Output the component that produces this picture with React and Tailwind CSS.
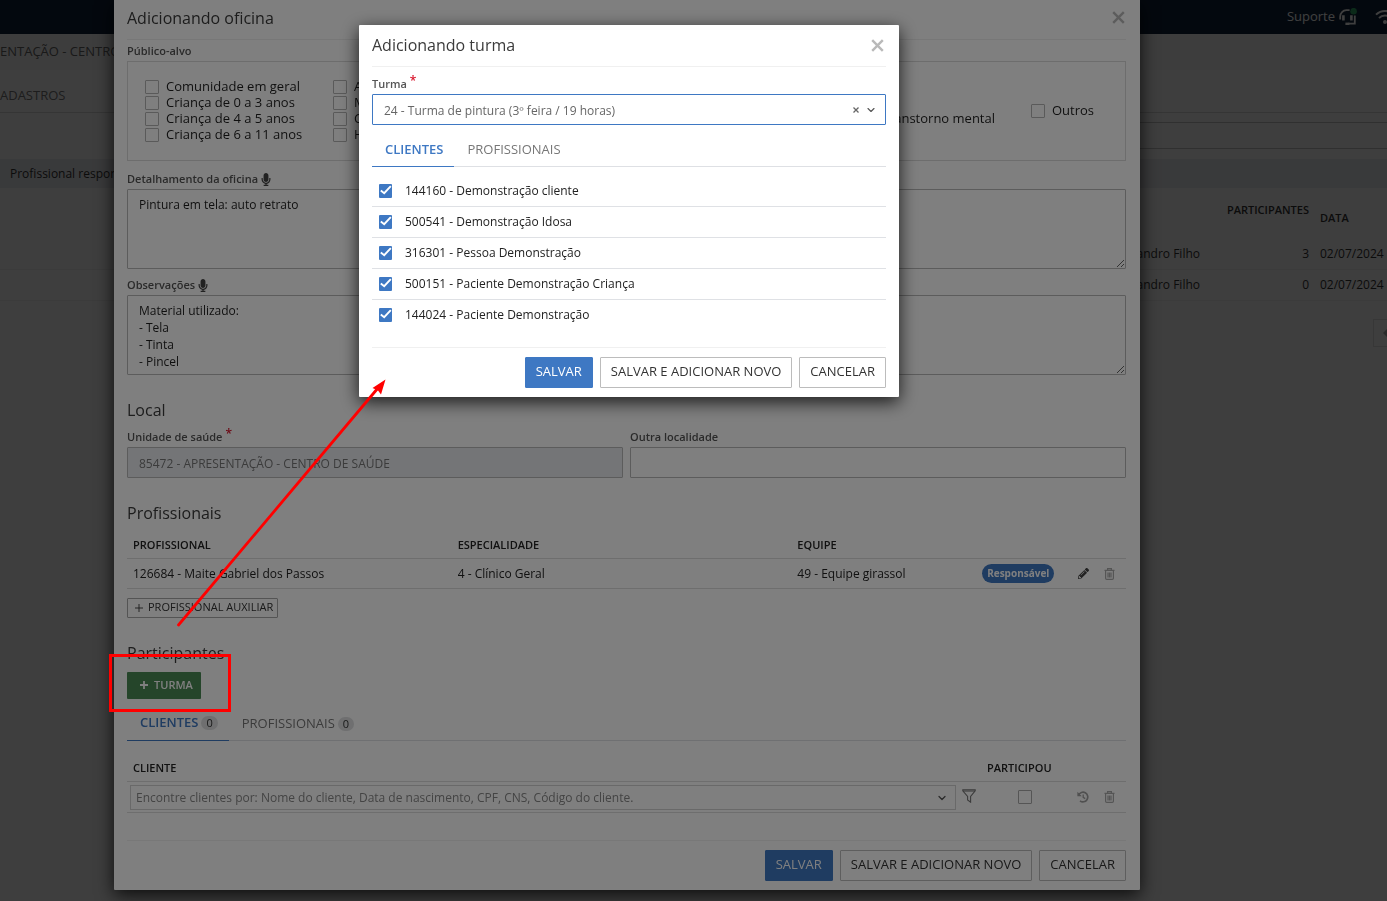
import React from "react";
import { FaMicrophone, FaPencilAlt } from "react-icons/fa";
import { ChevronDown } from "lucide-react";

const FONT = "font-['Open_Sans','Noto_Sans',sans-serif]";

function CloseIcon() {
  return (
    <svg viewBox="0 0 13 13" className="size-[13px]" fill="none" stroke="#b9b9b9" strokeWidth="2.4">
      <path d="M1.200 1.200l10.600 10.600M11.800 1.200L1.200 11.800" />
    </svg>
  );
}

function TrashIcon() {
  return (
    <svg viewBox="0 0 11 12" className="h-3 w-[11px]" fill="none" stroke="#aaaaaa" strokeWidth="1.2">
      <path d="M0.5 2.4h10M3.6 2.2V0.7h3.8v1.5M1.6 2.6v7.6q0 1.2 1.2 1.2h5.4q1.2 0 1.2-1.2V2.6M4 4.6v4.8M5.5 4.6v4.8M7 4.6v4.8" />
    </svg>
  );
}

function HistoryIcon() {
  return (
    <svg viewBox="0 0 12 12" className="size-3" fill="none" stroke="#a0a0a0" strokeWidth="1.7">
      <path d="M1.6 4A4.8 4.8 0 1 1 3 9.8" />
      <path d="M6.2 3.4v3l2 1.2" strokeWidth="1.3" />
      <path d="M0.4 0.8v4.4h4.4z" fill="#a0a0a0" stroke="none" />
    </svg>
  );
}

function FilterIcon() {
  return (
    <svg viewBox="0 0 14 14" className="size-3.5" fill="none" stroke="#777" strokeWidth="1.1">
      <path d="M0.8 0.8h12.4v1L8.6 7.4v5.8L5.6 11V7.4L0.8 1.8z" />
      <path d="M1 2h12" />
    </svg>
  );
}

function PlusIcon({ className }) {
  return (
    <svg viewBox="0 0 9 9" className={className} fill="none" stroke="currentColor">
      <path d="M4.5 0v9M0 4.5h9" />
    </svg>
  );
}

function HeadsetIcon() {
  return (
    <svg viewBox="0 0 18 18" className="size-[18px]" fill="none" stroke="#ffffff" strokeWidth="1.8">
      <path d="M1.200 11.400V8.600A6.400 6.400 0 0 1 7.400 2.200h3.200" />
      <path d="M15.800 7.600V15.600H9.400" />
      <path d="M4.400 7.200v5.400M12.400 7.200v5.400" strokeWidth="2.600" />
      <path d="M6.400 15.800h4" strokeWidth="2.400" />
      <circle cx="14.600" cy="3.200" r="3.300" fill="#2fa866" stroke="none" />
    </svg>
  );
}

function WifiIcon() {
  return (
    <svg viewBox="0 0 20 16" className="h-4 w-5 shrink-0" fill="none" stroke="#ffffff" strokeWidth="2">
      <path d="M1 5.6a13 13 0 0 1 18 0M4 9a8.6 8.6 0 0 1 12 0" />
      <circle cx="10" cy="13" r="2" fill="#ffffff" stroke="none" />
    </svg>
  );
}

function Label({ children, htmlFor, required, mic }) {
  return (
    <label htmlFor={htmlFor} className="flex h-[21px] items-center pt-[2px] text-[11px] font-semibold text-[#555]">
      {children}
      {required && <span className="ml-[3px] self-start text-[12px] leading-3 text-[#d9142b]">*</span>}
      {mic && <FaMicrophone className="ml-[3px] h-[13px] w-2.5 text-[#444]" />}
    </label>
  );
}

function Box({ label }) {
  return (
    <label className="flex h-4 items-center gap-[7px] whitespace-nowrap text-[13px] text-[#1f1f1f]">
      <input
        type="checkbox"
        className="size-3.5 shrink-0 appearance-none rounded-[1px] border border-[#b5b5b5] bg-white"
      />
      {label}
    </label>
  );
}

function Btn({ children, primary }) {
  return (
    <button
      type="button"
      className={`h-[31px] rounded-[1px] border px-[10px] pb-[2px] text-[13px] ${
        primary ? "border-[#3e78c3] bg-[#3e78c3] font-medium text-white" : "border-[#bcbcbc] bg-white text-[#333]"
      }`}
    >
      {children}
    </button>
  );
}

function Footer({ className }) {
  return (
    <footer className={`flex justify-end gap-[7px] border-t border-[#f0f0f0] py-[9px] ${className}`}>
      <Btn primary>SALVAR</Btn>
      <Btn>SALVAR E ADICIONAR NOVO</Btn>
      <Btn>CANCELAR</Btn>
    </footer>
  );
}

function Tabs({ counts }) {
  const badge = "rounded-full bg-[#dedfe1] px-[5px] text-[11px] font-normal leading-[14px] text-[#333]";
  return (
    <div role="tablist" className="mt-2 flex h-[34px] border-b border-[#dee0e4] text-[13px]">
      <button
        role="tab"
        aria-selected="true"
        className="flex h-[34px] items-center gap-[3px] border-b border-[#3e78c3] pr-[11px] pl-[13px] font-semibold text-[#3e78c3]"
      >
        CLIENTES {counts && <span className={badge}>0</span>}
      </button>
      <button
        role="tab"
        aria-selected="false"
        className="flex h-[34px] items-center gap-[3px] pr-[11px] pl-[13px] text-[#777]"
      >
        PROFISSIONAIS {counts && <span className={badge}>0</span>}
      </button>
    </div>
  );
}

function Backdrop() {
  return (
    <div className="flex min-h-screen flex-col bg-[#f9f9f9] text-[12px] text-[#333]">
      <div className="flex h-[34px] items-center justify-end gap-1 bg-[#0e2038] text-[13px] text-white">
        <span>Suporte</span>
        <HeadsetIcon />
        <span className="ml-[14px] flex w-3 overflow-hidden">
          <WifiIcon />
        </span>
      </div>
      <div className="flex h-9 items-center border-b border-[#f4f4f4] bg-[#f5f5f5] text-[13px] text-[#666]">
        ENTAÇÃO - CENTRO
      </div>
      <div className="flex h-[43px] items-center border-b border-[#d5d5d5] pt-[9px] text-[13px] text-[#777]">
        ADASTROS
      </div>
      <div className="ml-[160px] mt-[9px] h-[27px] border-y border-[#c0c0c0]" />
      <div className="mt-[10px] flex h-[29px] items-center bg-[#e6e8ec] px-[10px]">Profissional respon</div>
      <table className="w-full table-fixed text-[12px]">
        <colgroup>
          <col />
          <col className="w-[114px]" />
          <col className="w-[73px]" />
        </colgroup>
        <thead>
          <tr className="h-[50px] text-[11px]">
            <td />
            <th className="pr-[5px] pb-[6px] text-right font-semibold">PARTICIPANTES</th>
            <th className="px-[6px] pt-[11px] text-left font-semibold">DATA</th>
          </tr>
        </thead>
        <tbody>
          {["3", "0"].map((n) => (
            <tr key={n} className="h-[31px] border-b border-[#ececec]">
              <td className="pt-px text-right">andro Filho</td>
              <td className="pt-px pr-[5px] text-right">{n}</td>
              <td className="px-[6px] pt-px">02/07/2024</td>
            </tr>
          ))}
        </tbody>
      </table>
      <div className="mt-[18px] flex h-7 w-3.5 items-center self-end overflow-hidden border border-r-0 border-[#dedede] pl-[9px]">
        <svg viewBox="0 0 5 10" className="h-2.5 w-[5px] shrink-0" fill="#aaa">
          <path d="M5 0v10L0 5z" />
        </svg>
      </div>
    </div>
  );
}

function WorkshopDialog() {
  const h = "mt-[23px] h-6 text-[16px] leading-6 text-[#3b3b3b]";
  const area =
    "block h-20 w-full resize rounded-[1px] border border-[#b9b9b9] bg-white px-[11px] py-[6px] text-[12px] leading-[17px] text-[#1f1f1f]";
  return (
    <section
      role="dialog"
      aria-label="Adicionando oficina"
      className="w-full max-w-[1026px] self-start rounded-b-[1px] bg-white pr-[14px] pl-[13px] shadow-[0_5px_18px_rgba(0,0,0,0.8)]"
    >
      <header className="flex h-10 items-center justify-between border-b border-[#efefef] pb-1">
        <h1 className="text-[16px] text-[#3b3b3b]">Adicionando oficina</h1>
        <button aria-label="Fechar" className="mr-px">
          <CloseIcon />
        </button>
      </header>

      <Label>Público-alvo</Label>
      <div className="flex h-[100px] items-center border border-[#dadada] px-[17px]">
        <div className="w-[188px]">
          <Box label="Comunidade em geral" />
          <Box label="Criança de 0 a 3 anos" />
          <Box label="Criança de 4 a 5 anos" />
          <Box label="Criança de 6 a 11 anos" />
        </div>
        <div className="w-[188px]">
          <Box label="A" />
          <Box label="M" />
          <Box label="C" />
          <Box label="H" />
        </div>
        <div className="ml-auto flex h-16 items-end pb-4">
          <Box label="Transtorno mental" />
        </div>
        <div className="ml-9 w-[77px]">
          <Box label="Outros" />
        </div>
      </div>

      <div className="mt-[7px]">
        <Label htmlFor="det" mic>
          Detalhamento da oficina
        </Label>
        <textarea id="det" className={area} defaultValue="Pintura em tela: auto retrato" />
      </div>
      <div className="mt-[5px]">
        <Label htmlFor="obs" mic>
          Observações
        </Label>
        <textarea id="obs" className={area} defaultValue={"Material utilizado:\n- Tela\n- Tinta\n- Pincel"} />
      </div>

      <h2 className={h}>Local</h2>
      <div className="mt-1 grid grid-cols-2 gap-[7px]">
        <div>
          <Label htmlFor="uni" required>
            Unidade de saúde
          </Label>
          <input
            id="uni"
            readOnly
            value="85472 - APRESENTAÇÃO - CENTRO DE SAÚDE"
            className="h-[31px] w-full rounded-[1px] border border-[#b9b9b9] bg-[#e8ebef] px-[11px] pt-[2px] text-[12px] text-[#777]"
          />
        </div>
        <div>
          <Label htmlFor="loc">Outra localidade</Label>
          <input id="loc" className="h-[31px] w-full rounded-[1px] border border-[#b9b9b9] bg-white px-[11px] text-[12px]" />
        </div>
      </div>

      <h2 className={h}>Profissionais</h2>
      <table className="mt-2 w-full table-fixed text-left text-[12px] text-[#222]">
        <colgroup>
          <col className="w-[32.5%]" />
          <col className="w-[34%]" />
          <col className="w-[18.5%]" />
          <col />
        </colgroup>
        <thead>
          <tr className="h-[25px] border-b border-[#dcdcdc] text-[11px]">
            <th className="px-[6px] font-semibold">PROFISSIONAL</th>
            <th className="px-[6px] font-semibold">ESPECIALIDADE</th>
            <th className="px-[6px] font-semibold">EQUIPE</th>
            <td />
          </tr>
        </thead>
        <tbody>
          <tr className="h-[30px] border-b border-[#dcdcdc]">
            <td className="px-[6px] pt-px">126684 - Maite Gabriel dos Passos</td>
            <td className="px-[6px] pt-px">4 - Clínico Geral</td>
            <td className="px-[6px] pt-px">49 - Equipe girassol</td>
            <td className="px-[6px] pt-px">
              <div className="flex items-center">
                <span className="rounded-full bg-[#3e78c3] px-[5px] text-[10px] font-bold leading-[19px] text-white">
                  Responsável
                </span>
                <span className="ml-auto flex items-center gap-[15px] pr-[5px]">
                  <button aria-label="Editar">
                    <FaPencilAlt className="size-[11px] text-[#444]" />
                  </button>
                  <button aria-label="Excluir">
                    <TrashIcon />
                  </button>
                </span>
              </div>
            </td>
          </tr>
        </tbody>
      </table>
      <button className="mt-[9px] flex h-5 items-center gap-[5px] rounded-[1px] border border-[#a8a8a8] pr-1 pl-[7px] text-[11px] text-[#333]">
        <PlusIcon className="size-2" /> PROFISSIONAL AUXILIAR
      </button>

      <h2 className={h}>Participantes</h2>
      <button className="mt-[7px] flex h-[27px] items-center gap-[6px] rounded-[1px] bg-[#4a8a55] pr-2 pl-[13px] text-[11px] font-semibold text-white">
        <PlusIcon className="size-2 stroke-2" /> TURMA
      </button>
      <Tabs counts />
      <table className="mt-[15px] w-full table-fixed text-left text-[12px] text-[#222]">
        <colgroup>
          <col />
          <col className="w-[82px]" />
          <col className="w-[63px]" />
        </colgroup>
        <thead>
          <tr className="h-[26px] border-b border-[#dcdcdc] text-[11px]">
            <th className="px-[6px] font-semibold">CLIENTE</th>
            <th className="px-[6px] font-semibold">PARTICIPOU</th>
            <td />
          </tr>
        </thead>
        <tbody>
          <tr className="h-[31px] border-b border-[#dcdcdc]">
            <td className="pr-[5px] pl-[3px]">
              <div className="flex items-center gap-[6px]">
                <div className="relative flex-1">
                  <select
                    aria-label="Cliente"
                    className="block h-[25px] w-full appearance-none border border-[#d2d2d2] bg-white px-[5px] pt-[2px] text-[12px] text-[#888]"
                  >
                    <option>Encontre clientes por: Nome do cliente, Data de nascimento, CPF, CNS, Código do cliente.</option>
                  </select>
                  <ChevronDown className="pointer-events-none absolute top-[7px] right-2 size-3 text-[#555]" strokeWidth={2.5} />
                </div>
                <button aria-label="Filtrar" className="pb-[3px]">
                  <FilterIcon />
                </button>
              </div>
            </td>
            <td className="pl-[6px]">
              <input
                type="checkbox"
                aria-label="Participou"
                className="mx-auto block size-3.5 appearance-none rounded-[1px] border border-[#aaa] bg-white"
              />
            </td>
            <td className="px-[6px]">
              <span className="flex items-center justify-end gap-[15px] pr-[5px]">
                <button aria-label="Histórico">
                  <HistoryIcon />
                </button>
                <button aria-label="Excluir cliente">
                  <TrashIcon />
                </button>
              </span>
            </td>
          </tr>
        </tbody>
      </table>
      <Footer className="mt-[27px]" />
    </section>
  );
}

const CLIENTS = [
  "144160 - Demonstração cliente",
  "500541 - Demonstração Idosa",
  "316301 - Pessoa Demonstração",
  "500151 - Paciente Demonstração Criança",
  "144024 - Paciente Demonstração",
];

function ClassDialog() {
  return (
    <section
      role="dialog"
      aria-label="Adicionando turma"
      className="mt-[25px] w-full max-w-[540px] self-start rounded-[1px] bg-white px-[13px] shadow-[0_5px_18px_rgba(0,0,0,0.8)]"
    >
      <header className="flex h-[42px] items-center justify-between border-b border-[#f0f0f0]">
        <h1 className="pb-[2px] text-[16px] text-[#3b3b3b]">Adicionando turma</h1>
        <button aria-label="Fechar" className="mr-[2px]">
          <CloseIcon />
        </button>
      </header>
      <div className="mt-[6px]">
        <Label htmlFor="turma" required>
          Turma
        </Label>
        <div className="flex h-[31px] items-center gap-[6px] rounded-[1px] border border-[#3e78c3] pr-2">
          <select id="turma" className="h-full flex-1 appearance-none bg-white pt-[2px] pl-[11px] text-[12px] text-[#666]">
            <option>24 - Turma de pintura (3º feira / 19 horas)</option>
          </select>
          <button aria-label="Limpar">
            <svg viewBox="0 0 6 6" className="size-[6px]" fill="none" stroke="#666" strokeWidth="1.3">
              <path d="M0.5 0.5l5 5M5.5 0.5l-5 5" />
            </svg>
          </button>
          <ChevronDown className="size-3 text-[#555]" strokeWidth={2.3} />
        </div>
      </div>
      <Tabs />
      <ul className="mt-[9px] text-[12px] text-[#222]">
        {CLIENTS.map((c) => (
          <li key={c} className="border-b border-[#dfe1e5] last:border-transparent">
            <label className="flex h-[30px] items-center pl-[7px]">
              <span className="grid h-3.5 w-[13px] rounded-[1px] bg-[#3e78c3]">
                <input
                  type="checkbox"
                  defaultChecked
                  className="col-start-1 row-start-1 h-3.5 w-[13px] appearance-none rounded-[1px]"
                />
                <svg
                  viewBox="0 0 13 14"
                  className="pointer-events-none col-start-1 row-start-1 h-3.5 w-[13px]"
                  fill="none"
                  stroke="#ffffff"
                  strokeWidth="1.9"
                >
                  <path d="M1.800 6.400l3.400 2.800L11.800 2.200" />
                </svg>
              </span>
              <span className="ml-[13px]">{c}</span>
            </label>
          </li>
        ))}
      </ul>
      <Footer className="mt-4" />
    </section>
  );
}

function Annotations() {
  return (
    <svg
      className="pointer-events-none absolute top-0 left-0 h-[901px] w-[500px]"
      viewBox="0 0 500 901"
      fill="none"
      stroke="#ff0000"
      strokeWidth="3"
      aria-hidden="true"
    >
      <rect x="110.5" y="655.5" width="119" height="55" />
      <path d="M178.500 625L378 388" strokeLinecap="round" strokeWidth="2.8" />
      <path d="M385.500 379.500L381 394.500L378 390.500L372.500 388z" fill="#ff0000" stroke="none" />
    </svg>
  );
}

export default function App() {
  return (
    <main className={`relative h-screen overflow-hidden ${FONT}`}>
      <Backdrop />
      <div className="absolute inset-0 flex justify-center bg-black/50 pr-[133px]">
        <WorkshopDialog />
      </div>
      <div className="absolute inset-0 flex justify-center bg-black/50 pr-[129px]">
        <ClassDialog />
      </div>
      <Annotations />
    </main>
  );
}
